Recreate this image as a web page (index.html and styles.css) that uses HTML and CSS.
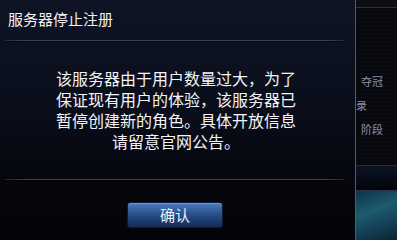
FILE: index.html
```html
<!DOCTYPE html>
<html lang="zh">
<head>
<meta charset="utf-8">
<link rel="stylesheet" href="styles.css">
</head>
<body>
<div class="screen">
  <div class="dialog">
    <div class="dlg-head">服务器停止注册</div>
    <div class="rule"></div>
    <div class="dlg-body">
      <p class="msg">该服务器由于用户数量过大，为了<br>保证现有用户的体验，该服务器已<br>暂停创建新的角色。具体开放信息<br>请留意官网公告。</p>
    </div>
    <div class="rule"></div>
    <div class="dlg-foot">
      <button class="btn">确认</button>
    </div>
  </div>
  <div class="side">
    <div class="side-top"></div>
    <div class="side-list">
      <div class="side-item">夺冠</div>
      <div class="side-item side-cut">录</div>
      <div class="side-item">阶段</div>
    </div>
    <div class="side-band"></div>
    <div class="side-pic"></div>
  </div>
</div>
</body>
</html>
```

FILE: styles.css
```css
html, body {
  margin: 0;
  padding: 0;
  background: #04050a;
}
.screen {
  width: 397px;
  height: 240px;
  display: flex;
  overflow: hidden;
  font-family: "Noto Sans CJK SC", "Noto Sans", sans-serif;
}
.dialog {
  width: 355px;
  flex: none;
  display: flex;
  flex-direction: column;
  background: linear-gradient(180deg, #0f1425 0%, #0a0e1b 45%, #05070d 75%, #030407 100%);
  border-right: 1px solid #555a68;
}
.dlg-head {
  height: 40px;
  line-height: 38px;
  padding-left: 8px;
  color: #f2f2f4;
  font-size: 15px;
}
.rule {
  height: 1px;
  margin: 0 10px 0 5px;
  background: linear-gradient(90deg, rgba(70,76,92,0.4) 0%, #3c4252 6%, #3c4252 94%, rgba(60,66,82,0.5) 100%);
  box-shadow: 0 1px 1px rgba(0,0,0,0.6);
}
.dlg-body {
  height: 138px;
  display: flex;
  align-items: center;
  justify-content: center;
  padding-right: 3px;
}
.msg {
  margin: 0;
  font-size: 16px;
  line-height: 21px;
  text-align: center;
  color: #f4f4f6;
}
.dlg-foot {
  flex: 1;
  display: flex;
  justify-content: center;
  align-items: flex-start;
  padding-top: 22px;
  padding-right: 5px;
}
.btn {
  width: 96px;
  height: 26px;
  padding: 0;
  border: 1px solid #0d1a33;
  border-radius: 3px;
  background: linear-gradient(180deg, #4a7dc0 0%, #2f5b98 35%, #1d3e73 70%, #142c55 100%);
  box-shadow: inset 0 1px 0 rgba(140,180,230,0.5);
  color: #f0f2f6;
  font-family: "Noto Sans CJK SC", "Noto Sans", sans-serif;
  font-size: 15px;
  line-height: 24px;
}
.side {
  flex: 1;
  display: flex;
  flex-direction: column;
  background: #05070d;
  overflow: hidden;
}
.side-top {
  height: 7px;
  border-bottom: 1px solid #2c303a;
  background: #0c0e14;
}
.side-list {
  padding-top: 61px;
  padding-left: 5px;
  height: 157px;
  box-sizing: border-box;
  background: repeating-linear-gradient(0deg, #06080e 0px, #06080e 3px, #0b0e16 3px, #0b0e16 4px);
}
.side-item {
  font-size: 11px;
  line-height: 24px;
  color: #8a91a6;
  white-space: nowrap;
}
.side-cut {
  margin-left: -5px;
}
.side-band {
  height: 24px;
  border-top: 1px solid #1f2c44;
  border-bottom: 1px solid #2a3550;
  background: linear-gradient(180deg, #0b1424, #03050a);
}
.side-pic {
  flex: 1;
  background: linear-gradient(160deg, #0e3244 0%, #1e5b70 40%, #143f55 70%, #0b2433 100%);
}
```
